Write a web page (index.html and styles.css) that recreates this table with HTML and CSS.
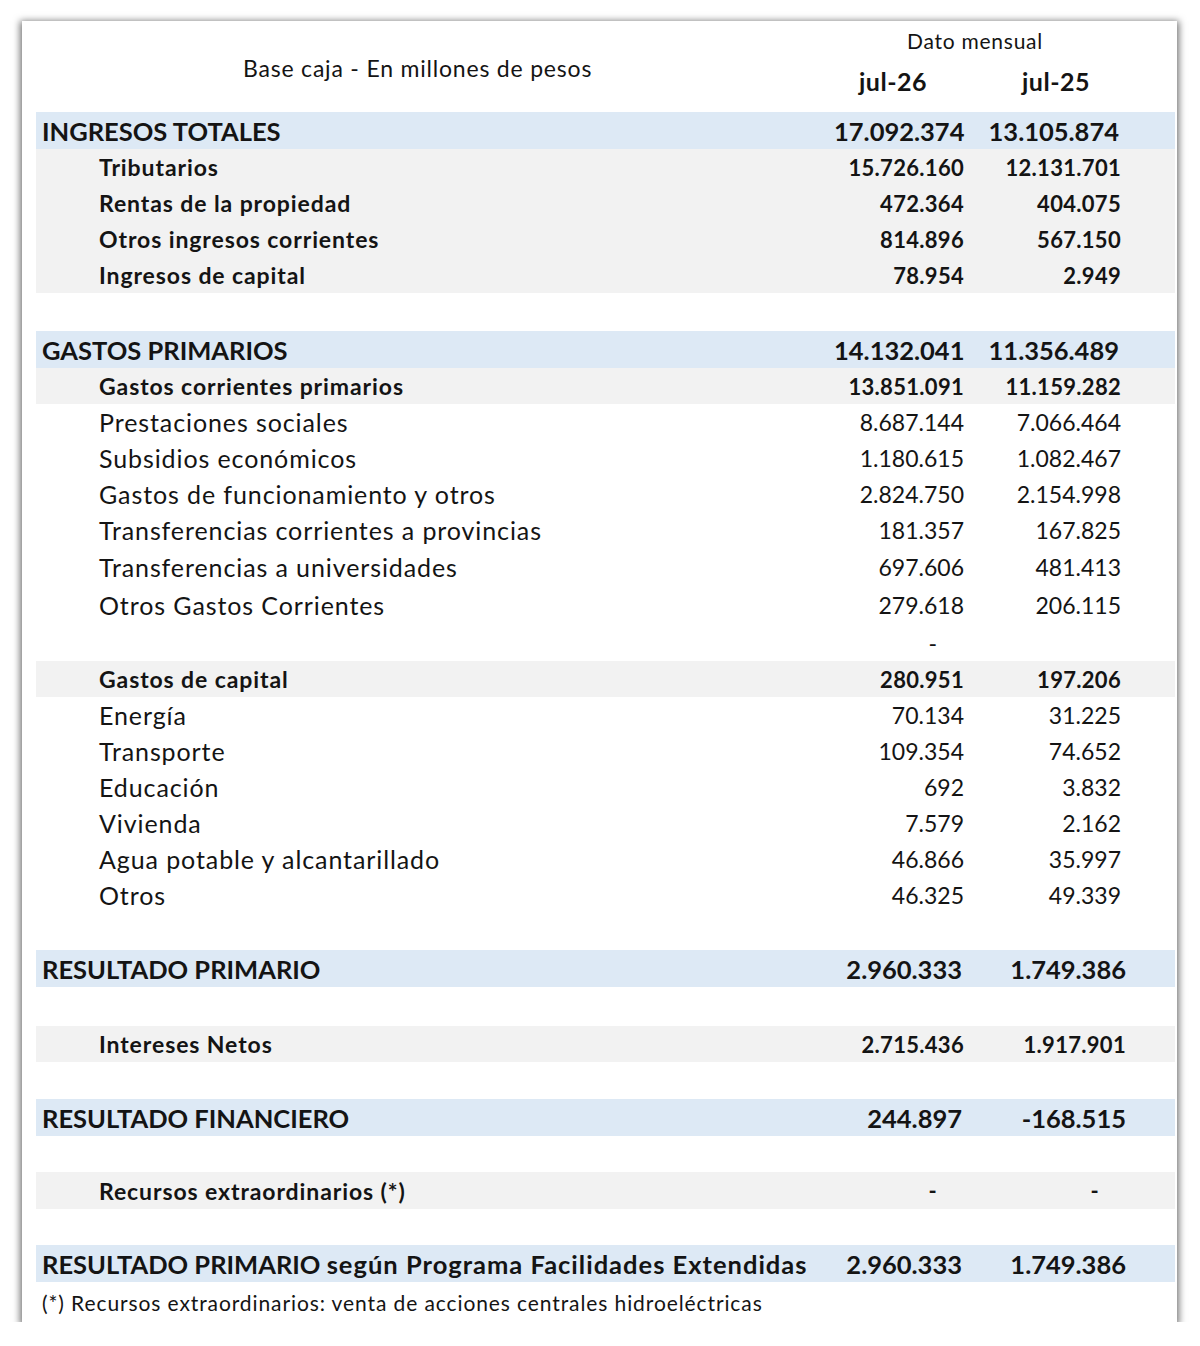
FILE: index.html
```html
<!DOCTYPE html>
<html lang="es">
<head>
<meta charset="utf-8">
<title>Resultado fiscal</title>
<link rel="stylesheet" href="styles.css">
</head>
<body>
<div class="card">
  <div class="head">
    <div class="head-label">Base caja - En millones de pesos</div>
    <div class="head-cols">
      <div class="head-title">Dato mensual</div>
      <div class="head-months">
        <div class="m1">jul-26</div>
        <div class="m2">jul-25</div>
      </div>
    </div>
  </div>

  <div class="row main"><div class="lab">INGRESOS TOTALES</div><div class="v1">17.092.374</div><div class="v2">13.105.874</div></div>
  <div class="row sub"><div class="lab">Tributarios</div><div class="v1">15.726.160</div><div class="v2">12.131.701</div></div>
  <div class="row sub"><div class="lab">Rentas de la propiedad</div><div class="v1">472.364</div><div class="v2">404.075</div></div>
  <div class="row sub"><div class="lab">Otros ingresos corrientes</div><div class="v1">814.896</div><div class="v2">567.150</div></div>
  <div class="row sub"><div class="lab">Ingresos de capital</div><div class="v1">78.954</div><div class="v2">2.949</div></div>
  <div class="gap g38"></div>

  <div class="row main"><div class="lab">GASTOS PRIMARIOS</div><div class="v1">14.132.041</div><div class="v2">11.356.489</div></div>
  <div class="row sub"><div class="lab">Gastos corrientes primarios</div><div class="v1">13.851.091</div><div class="v2">11.159.282</div></div>
  <div class="row item"><div class="lab">Prestaciones sociales</div><div class="v1">8.687.144</div><div class="v2">7.066.464</div></div>
  <div class="row item"><div class="lab">Subsidios económicos</div><div class="v1">1.180.615</div><div class="v2">1.082.467</div></div>
  <div class="row item"><div class="lab">Gastos de funcionamiento y otros</div><div class="v1">2.824.750</div><div class="v2">2.154.998</div></div>
  <div class="row item"><div class="lab">Transferencias corrientes a provincias</div><div class="v1">181.357</div><div class="v2">167.825</div></div>
  <div class="row item tall"><div class="lab">Transferencias a universidades</div><div class="v1">697.606</div><div class="v2">481.413</div></div>
  <div class="row item tall"><div class="lab">Otros Gastos Corrientes</div><div class="v1">279.618</div><div class="v2">206.115</div></div>
  <div class="row item dashrow"><div class="lab"></div><div class="v1 dash">-</div><div class="v2"></div></div>
  <div class="row sub"><div class="lab">Gastos de capital</div><div class="v1">280.951</div><div class="v2">197.206</div></div>
  <div class="row item"><div class="lab">Energía</div><div class="v1">70.134</div><div class="v2">31.225</div></div>
  <div class="row item"><div class="lab">Transporte</div><div class="v1">109.354</div><div class="v2">74.652</div></div>
  <div class="row item"><div class="lab">Educación</div><div class="v1">692</div><div class="v2">3.832</div></div>
  <div class="row item"><div class="lab">Vivienda</div><div class="v1">7.579</div><div class="v2">2.162</div></div>
  <div class="row item"><div class="lab">Agua potable y alcantarillado</div><div class="v1">46.866</div><div class="v2">35.997</div></div>
  <div class="row item"><div class="lab">Otros</div><div class="v1">46.325</div><div class="v2">49.339</div></div>
  <div class="gap g37"></div>

  <div class="row main result"><div class="lab">RESULTADO PRIMARIO</div><div class="v1">2.960.333</div><div class="v2">1.749.386</div></div>
  <div class="gap g39"></div>
  <div class="row sub result"><div class="lab">Intereses Netos</div><div class="v1">2.715.436</div><div class="v2">1.917.901</div></div>
  <div class="gap g37"></div>
  <div class="row main result"><div class="lab">RESULTADO FINANCIERO</div><div class="v1">244.897</div><div class="v2">-168.515</div></div>
  <div class="gap g36"></div>
  <div class="row sub recursos"><div class="lab">Recursos extraordinarios (*)</div><div class="v1 dash">-</div><div class="v2 dash">-</div></div>
  <div class="gap g36"></div>
  <div class="row main result"><div class="lab">RESULTADO PRIMARIO <span class="lc">según Programa Facilidades Extendidas</span></div><div class="v1">2.960.333</div><div class="v2">1.749.386</div></div>

  <div class="note">(*) Recursos extraordinarios: venta de acciones centrales hidroeléctricas</div>
</div>
</body>
</html>
```

FILE: styles.css
```css
html, body {
  margin: 0;
  padding: 0;
  background: #ffffff;
}

body {
  font-family: "Lato", "Liberation Sans", sans-serif;
  color: #141414;
  padding: 21px 0 0 22px;
}

.card {
  width: 1155px;
  height: 1301px;
  box-sizing: border-box;
  padding: 0 2px 0 14px;
  background: #ffffff;
  box-shadow: 0 2px 7px 2px rgba(0, 0, 0, 0.55);
}

/* header */
.head {
  height: 91px;
  display: grid;
  grid-template-columns: 1fr 292px 49px;
}

.head-label {
  font-size: 23px;
  letter-spacing: 0.8px;
  padding: 34px 0 0 207px;
  line-height: 26px;
  white-space: nowrap;
}

.head-cols {
  display: flex;
  flex-direction: column;
}

.head-title {
  font-size: 21px;
  letter-spacing: 0.75px;
  line-height: 24px;
  padding-top: 8px;
  padding-right: 10px;
  text-align: center;
}

.head-months {
  display: grid;
  grid-template-columns: 130px 162px;
  font-weight: 700;
  font-size: 25px;
  letter-spacing: 0.5px;
  line-height: 30px;
  padding-top: 13px;
}

.m1 { text-align: right; padding-right: 37px; }
.m2 { text-align: right; padding-right: 36px; }

/* rows */
.row {
  display: grid;
  grid-template-columns: 1fr 130px 162px;
  padding-right: 49px;
  height: 36px;
  align-items: center;
  white-space: nowrap;
}

.row .v1, .row .v2 {
  text-align: right;
}

.main {
  height: 37px;
  background: #dde9f5;
  font-weight: 700;
  font-size: 25.5px;
}

.main .lab { padding-left: 6px; }
.main .lc { letter-spacing: 1px; }
.main .v1 { padding-right: 2px; }
.main .v2 { padding-right: 7px; }
.main.result .v2 { padding-right: 0; }

.sub {
  background: #f2f2f2;
  font-weight: 700;
  font-size: 22px;
}

.sub .lab {
  font-size: 23px;
  letter-spacing: 0.9px;
}

.sub .v1, .sub .v2 { letter-spacing: 0.3px; }

.sub .lab, .item .lab { padding-left: 63px; }
.sub .v2, .item .v2 { padding-right: 5px; }
.sub.result .v2 { padding-right: 0; }
.sub.recursos { height: 37px; }

.item {
  font-size: 23px;
  font-weight: 400;
}

.item .lab {
  font-size: 25px;
  letter-spacing: 0.9px;
}

.tall { height: 38px; }
.dashrow { height: 37px; }

.row .dash { padding-right: 27px; }
.row .v2.dash { padding-right: 27px; }

.gap { height: 36px; }
.g36 { height: 36px; }
.g37 { height: 37px; }
.g38 { height: 38px; }
.g39 { height: 39px; }

.note {
  font-size: 21px;
  letter-spacing: 0.9px;
  line-height: 24px;
  padding: 9px 0 0 6px;
  white-space: nowrap;
}
```
